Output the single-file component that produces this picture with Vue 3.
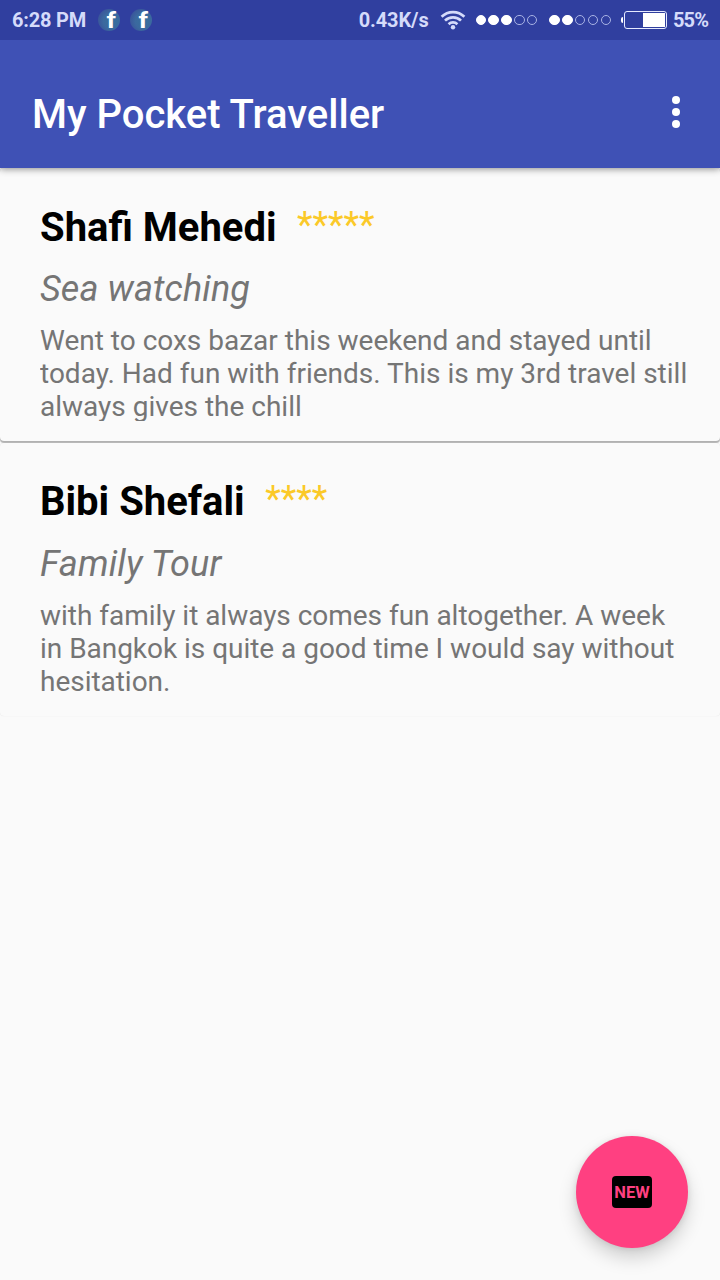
<script setup>
const posts = [
  {
    name: 'Shafi Mehedi',
    stars: '*****',
    title: 'Sea watching',
    lines: [
      'Went to coxs bazar this weekend and stayed until',
      'today. Had fun with friends. This is my 3rd travel still',
      'always gives the chill',
    ],
  },
  {
    name: 'Bibi Shefali',
    stars: '****',
    title: 'Family Tour',
    lines: [
      'with family it always comes fun altogether. A week',
      'in Bangkok is quite a good time I would say without',
      'hesitation.',
    ],
  },
]
const signals = [3, 2]
</script>

<template>
  <div class="screen">
    <div class="status">
      <span class="clock">6:28 PM</span>
      <span v-for="n in 2" :key="n" class="fb"><b>f</b></span>
      <span class="speed">0.43K/s</span>
      <svg class="wifi" width="26" height="20" viewBox="0 0 26 20" fill="none" stroke="#d5dbfa" stroke-width="2.7">
        <path d="M1.6 6.8a16.1 16.1 0 0 1 22.8 0" />
        <path d="M5 10.6a11.3 11.3 0 0 1 16 0" />
        <path d="M8.6 14.3a6.2 6.2 0 0 1 8.8 0" />
        <circle cx="13" cy="17.2" r="2.2" fill="#d5dbfa" stroke="none" />
      </svg>
      <span v-for="(level, i) in signals" :key="'s' + i" class="signal">
        <i v-for="n in 5" :key="n" :class="{ on: n <= level }"></i>
      </span>
      <span class="nub"></span>
      <span class="battery"><i></i></span>
      <span class="percent">55%</span>
    </div>

    <header class="bar">
      <h1>My Pocket Traveller</h1>
      <div class="more"><i></i><i></i><i></i></div>
    </header>

    <main>
      <article v-for="p in posts" :key="p.name" class="card">
        <div class="head">
          <h2>{{ p.name }}</h2>
          <span class="stars">{{ p.stars }}</span>
        </div>
        <h3>{{ p.title }}</h3>
        <p><span v-for="l in p.lines" :key="l">{{ l }}</span></p>
      </article>
    </main>

    <button class="fab"><span class="new">NEW</span></button>
  </div>
</template>

<style>
body { background: #fafafa; }
</style>

<style scoped>
.screen {
  position: relative;
  width: 720px;
  height: 1280px;
  overflow: hidden;
  background: #fafafa;
  font-family: Roboto, "Liberation Sans", sans-serif;
}
.status {
  position: relative;
  z-index: 3;
  display: flex;
  align-items: center;
  box-sizing: border-box;
  height: 40px;
  padding: 0 12px;
  background: #303f9f;
  color: #d5dbfa;
  font-size: 20px;
  font-weight: 700;
  white-space: nowrap;
}
.clock { width: 86px; letter-spacing: -0.2px; }
.fb {
  display: flex;
  justify-content: center;
  width: 22px;
  height: 22px;
  margin-right: 10px;
  border-radius: 50%;
  background: radial-gradient(circle at 62% 55%, #36709c 0%, #3b699f 45%, #39569b 75%, #34479c 100%);
  color: #fff;
}
.fb b { padding: 0 0 0 4px; font-size: 22px; line-height: 23px; font-weight: 700; transform: scaleX(1.2); }
.speed { width: 71px; margin-left: auto; letter-spacing: -0.1px; }
.wifi { margin: 0 10px 0 10px; flex: none; }
.signal { display: flex; gap: 2.3px; margin-right: 12px; }
.signal + .signal { margin-right: 10px; }
.signal i {
  box-sizing: border-box;
  width: 10.5px;
  height: 10.5px;
  border: 1px solid #a9b3e4;
  border-radius: 50%;
}
.signal i.on { background: #fff; border-color: #fff; }
.nub { width: 2px; height: 6px; margin-right: 1px; border-radius: 2px 0 0 2px; background: #fff; }
.battery {
  display: flex;
  justify-content: flex-end;
  box-sizing: border-box;
  width: 43px;
  height: 18px;
  border: 1px solid #e6eaff;
  border-radius: 3px;
  padding: 1px;
}
.battery i { width: 22px; background: #fff; }
.percent { width: 35px; margin-left: 6px; letter-spacing: -0.9px; }

.bar {
  position: relative;
  z-index: 2;
  display: flex;
  align-items: center;
  justify-content: space-between;
  box-sizing: border-box;
  height: 128px;
  padding: 18px 40px 0 32px;
  background: #3f51b5;
  box-shadow: 0 1px 7px rgba(0, 0, 0, 0.45);
}
h1, h2, h3, p { margin: 0; white-space: nowrap; }
h1 { margin-top: 2px; color: #fff; font-size: 40px; line-height: 47px; font-weight: 500; }
.more { display: flex; flex-direction: column; gap: 4px; margin-top: -2px; }
.more i { width: 8px; height: 8px; border-radius: 50%; background: #fff; }

.card {
  box-sizing: border-box;
  height: 273px;
  margin-bottom: 2px;
  padding: 36px 0 0 40px;
  border-radius: 4px;
  background: #fafafa;
}
main { overflow: hidden; padding-bottom: 3px; }
.card:first-child { box-shadow: 0 2px 1px rgba(0, 0, 0, 0.28), 0 0 1px rgba(0, 0, 0, 0.2); }
.card:last-child { box-shadow: 0 0 1px rgba(0, 0, 0, 0.12); }
.head { display: flex; align-items: flex-start; height: 47px; }
h2 { color: #000; font-size: 40px; line-height: 47px; font-weight: 700; }
.card:last-child .head { margin-top: -1px; margin-bottom: 1px; }
.stars { margin-left: 20.6px; color: #fbc928; font-size: 36px; line-height: 42px; letter-spacing: -0.05px; }
h3 {
  margin-top: 17px;
  color: #757575;
  font-size: 36px;
  line-height: 42px;
  font-weight: 400;
  font-style: italic;
  letter-spacing: 0.12px;
}
p {
  height: 96px;
  margin-top: 15.4px;
  overflow: hidden;
  color: #757575;
  font-size: 28px;
  line-height: 32.8px;
}
.card:last-child h3 { margin-top: 18px; }
.card:last-child p { height: 99px; letter-spacing: -0.03px; }
p span { display: block; }

.fab {
  position: absolute;
  right: 32px;
  bottom: 32px;
  display: flex;
  align-items: center;
  justify-content: center;
  width: 112px;
  height: 112px;
  padding: 0;
  border: 0;
  border-radius: 50%;
  background: #ff4081;
  box-shadow: 0 10px 18px rgba(0, 0, 0, 0.17), 0 1px 6px rgba(0, 0, 0, 0.1);
}
.new {
  width: 40px;
  height: 32px;
  border-radius: 4px;
  background: #000;
  color: #ff4081;
  font: 700 16.5px/33px Roboto, sans-serif;
  text-align: center;
}
</style>
